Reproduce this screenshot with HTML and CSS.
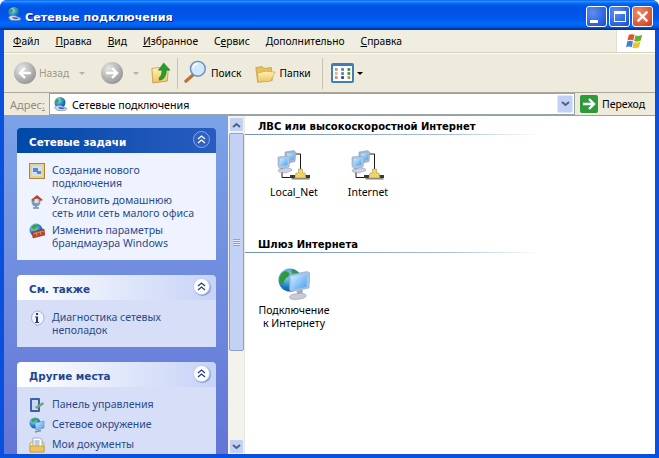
FILE: index.html
```html
<!DOCTYPE html>
<html lang="ru">
<head>
<meta charset="utf-8">
<title>Сетевые подключения</title>
<link rel="stylesheet" href="styles.css">
</head>
<body>
<svg class="defs" width="0" height="0" aria-hidden="true">
  <defs>
    <linearGradient id="gScreen" x1="0" y1="0" x2="1" y2="1"><stop offset="0" stop-color="#d8f0ff"/><stop offset="1" stop-color="#3f9df0"/></linearGradient>
    <radialGradient id="gGlobe" cx=".35" cy=".3" r=".8"><stop offset="0" stop-color="#9fe0ff"/><stop offset=".6" stop-color="#1f7fc8"/><stop offset="1" stop-color="#0d4a90"/></radialGradient>
    <linearGradient id="gFolder" x1="0" y1="0" x2="0" y2="1"><stop offset="0" stop-color="#fff3b8"/><stop offset="1" stop-color="#eec45c"/></linearGradient>
    <radialGradient id="gGray" cx=".35" cy=".3" r=".8"><stop offset="0" stop-color="#e6e6e6"/><stop offset="1" stop-color="#8f8f8f"/></radialGradient>
    <symbol id="globe" viewBox="0 0 16 16">
      <circle cx="7" cy="6.5" r="5.5" fill="url(#gGlobe)"/>
      <path d="M3 3.5c2-1 3 0 3 1.500s-2 1-2.500 2.500-1.500 0-1.500-1.500zM7.500 2c2 0 3.500 1 3.500 2s-2 .5-2.500 0-1.500-1-1-2z" fill="#3da63a"/>
      <path d="M2 10.500c2-1.500 6-1.500 8 0l3.500 1.500c1 1-.5 2.500-3 2.500H6c-2.500 0-5-2-4-4z" fill="#cfd6e8" stroke="#6a7aa8" stroke-width=".6"/>
      <path d="M5 11l5 .5 2 1.500-5 0z" fill="#2f68b8"/>
    </symbol>
    <symbol id="lan" viewBox="0 0 36 30">
      <path d="M18 4h6.500v16" fill="none" stroke="#1a1a1a" stroke-width="1"/>
      <path d="M6 18v9.500h9" fill="none" stroke="#1a1a1a" stroke-width="1"/>
      <path d="M9 2l9-1.500 2 2-1 9-8 2-2-2z" fill="#a4b8d4" stroke="#7f96b8" stroke-width=".5"/>
      <path d="M11 4l6.500-1 .5 6.500-6.500 1.500z" fill="url(#gScreen)"/>
      <path d="M2 7l10-1 2 2-1 9-9 2-2-3z" fill="#b4c6de" stroke="#7f96b8" stroke-width=".5"/>
      <path d="M4 9l7-1 .5 7-7 1.500z" fill="url(#gScreen)"/>
      <path d="M2 20l8-2 5 .5 1 2-7 2.500-6-1z" fill="#cfd2e4" stroke="#8a90b0" stroke-width=".5"/>
      <path d="M14 25h5v3h-5zM29 25h5v3h-5z" fill="#3c3a2c"/>
      <path d="M22.500 19h4v4h2.500l1 5h-11l1-5h2.500z" fill="#f0d468" stroke="#a8882c" stroke-width=".5"/>
      <path d="M15 28h18l1 1.500H16z" fill="#8a8a80"/>
    </symbol>
    <symbol id="gateway" viewBox="0 0 32 32">
      <circle cx="12" cy="12" r="11.500" fill="url(#gGlobe)"/>
      <path d="M4 5c3-3 7-2 7.500 1s-3 3-4.500 5.500-1 6-4 4-1-8 1-10.500zM14 2c3 0 5 1.500 6 3l-4.500.5c-1.500-.5-2-2-1.500-3.500z" fill="#2f9a3a"/>
      <path d="M11 7l18-3.500 3 1.500-1 15-17.500 3.500L11.500 22z" fill="#a8c4e4" stroke="#7a98bc" stroke-width=".5"/>
      <path d="M13 8.500l16-2.500-.5 13-14.500 3z" fill="url(#gScreen)"/>
      <path d="M18.500 23l6-1.500.5 3-5.500 1.500z" fill="#a8a8b4"/>
      <path d="M12 28c2-2 8-3 13-2.500 3.500.5 4 2.500 2 4-3 2-11 2.500-14 1.500-1.500-.5-2-2-1-3z" fill="#c8ccd8" stroke="#8a8ea0" stroke-width=".5"/>
    </symbol>
    <symbol id="folder" viewBox="0 0 24 24">
      <path d="M2 6l7-1 2 2 8-1 1 14-16 2z" fill="#e8bf58" stroke="#b89238" stroke-width=".7"/>
      <path d="M4 12l9-2 10 1-5 10-14 1z" fill="url(#gFolder)" stroke="#c8a040" stroke-width=".7"/>
    </symbol>
    <symbol id="chevUp" viewBox="0 0 9 9">
      <path d="M1 4l3.500-3L8 4M1 8l3.500-3L8 8" fill="none" stroke="currentColor" stroke-width="1.300"/>
    </symbol>
  </defs>
</svg>

<div class="window">
  <header class="titlebar">
    <svg class="title-icon"><use href="#globe"/></svg>
    <span class="title-text">Сетевые подключения</span>
    <div class="caption-btns">
      <button class="cap cap-blue" aria-label="Свернуть"><span class="glyph-min"></span></button>
      <button class="cap cap-blue" aria-label="Развернуть"><span class="glyph-max"></span></button>
      <button class="cap cap-red" aria-label="Закрыть">
        <svg viewBox="0 0 12 12" width="13" height="13"><path d="M1.500 1.500l9 9M10.500 1.500l-9 9" stroke="#fff" stroke-width="2.200"/></svg>
      </button>
    </div>
  </header>

  <div class="inner">
    <nav class="menubar">
      <div class="menus">
        <span class="menu"><u>Ф</u>айл</span>
        <span class="menu"><u>П</u>равка</span>
        <span class="menu"><u>В</u>ид</span>
        <span class="menu"><u>И</u>збранное</span>
        <span class="menu">С<u>е</u>рвис</span>
        <span class="menu"><u>Д</u>ополнительно</span>
        <span class="menu"><u>С</u>правка</span>
      </div>
      <div class="flag-box">
        <svg viewBox="0 0 22 20" width="21" height="19">
          <path d="M3 3c2-1 4-1 6 0l-1.500 6c-2-1-4-1-6 0z" fill="#e8502c"/>
          <path d="M10 3.500c2 1 4 1 7-.500l-1.500 6c-3 1.500-5 1.500-7 .5z" fill="#68b030"/>
          <path d="M1.300 10c2-1 4-1 6 0L6 16c-2-1-4-1-6 0z" fill="#3c80e0"/>
          <path d="M8.200 10.500c2 1 4 1 7-.500L13.700 16c-3 1.500-5 1.500-7 .5z" fill="#f0c030"/>
        </svg>
      </div>
    </nav>

    <div class="toolbar">
      <div class="tb-group tb-nav">
        <span class="round-btn"><svg viewBox="0 0 22 22" width="22" height="22"><circle cx="11" cy="11" r="11" fill="url(#gGray)"/><path d="M17 11H7M11 6l-5 5 5 5" fill="none" stroke="#fff" stroke-width="2.400"/></svg></span>
        <span class="tb-label muted">Назад</span>
        <span class="mini-arrow"></span>
        <span class="round-btn fwd"><svg viewBox="0 0 22 22" width="22" height="22"><circle cx="11" cy="11" r="11" fill="url(#gGray)"/><path d="M5 11h10M11 6l5 5-5 5" fill="none" stroke="#fff" stroke-width="2.400"/></svg></span>
        <span class="mini-arrow"></span>
        <svg class="up-icon" viewBox="0 0 22 26" width="20" height="24">
          <path d="M1 9l8-1 1 2 9-1-1 14-16 2z" fill="url(#gFolder)" stroke="#b89238" stroke-width=".8"/>
          <path d="M9 19c2-1 3-4 3-8H8l6-8 7 8h-4c0 6-3 11-8 11z" fill="#2c9a30" stroke="#12701c" stroke-width=".5"/>
        </svg>
      </div>
      <div class="tb-group tb-tools">
        <svg class="search-icon" viewBox="0 0 26 26" width="24" height="24">
          <path d="M10 16l-8 7" stroke="#c0703a" stroke-width="3.400" stroke-linecap="round"/>
          <circle cx="15" cy="9.500" r="8" fill="#cfe8fa" stroke="#6a90c0" stroke-width="1.600"/>
          <path d="M10 9c0-3 2-5 5-5" fill="none" stroke="#fff" stroke-width="1.500"/>
        </svg>
        <span class="tb-label">Поиск</span>
        <svg class="folders-icon"><use href="#folder"/></svg>
        <span class="tb-label">Папки</span>
      </div>
      <div class="tb-group tb-views">
        <span class="view-btn">
          <svg viewBox="0 0 20 14" width="18" height="13">
            <g fill="#c88a70"><rect x="1" y="1" width="3" height="3"/><rect x="1" y="10" width="3" height="3"/></g>
            <g fill="#5a7ab0"><rect x="1" y="5.500" width="3" height="3" fill="#d8b0a0"/><rect x="8" y="1" width="3" height="3"/><rect x="8" y="5.500" width="3" height="3"/><rect x="8" y="10" width="3" height="3" fill="#1f3f80"/></g>
            <g fill="#3f8a50"><rect x="15" y="1" width="3" height="3"/><rect x="15" y="5.500" width="3" height="3"/><rect x="15" y="10" width="3" height="3" fill="#b09050"/></g>
          </svg>
        </span>
        <span class="black-arrow"></span>
      </div>
    </div>

    <div class="addressbar">
      <span class="addr-label">Адрес<u>:</u></span>
      <div class="addr-field">
        <svg class="addr-icon"><use href="#globe"/></svg>
        <span class="addr-text">Сетевые подключения</span>
        <span class="addr-drop"><svg viewBox="0 0 9 6" width="9" height="6"><path d="M1 1l3.500 3L8 1" fill="none" stroke="#4d6185" stroke-width="2"/></svg></span>
      </div>
      <span class="go-btn"><svg viewBox="0 0 18 18" width="18" height="18"><rect width="18" height="18" rx="2" fill="#2f9a3c"/><path d="M3 9h10M9 4l5 5-5 5" fill="none" stroke="#fff" stroke-width="2.400"/></svg></span>
      <span class="go-label">Переход</span>
    </div>

    <main class="main">
      <aside class="sidebar">
        <section class="card card-primary">
          <div class="card-head">
            <span class="head-text">Сетевые задачи</span>
            <span class="chev"><svg viewBox="0 0 9 9" width="9" height="9"><use href="#chevUp"/></svg></span>
          </div>
          <ul class="card-body">
            <li class="task">
              <svg class="task-icon" viewBox="0 0 16 16"><rect x=".5" y=".5" width="15" height="15" fill="#e8d090" stroke="#a88840"/><rect x="3" y="3" width="10" height="10" fill="#cfe0f4"/><path d="M4 5h5v4H4zM8 8h4v3H8z" fill="#5a88c8"/></svg>
              <span>Создание нового<br>подключения</span>
            </li>
            <li class="task">
              <svg class="task-icon" viewBox="0 0 16 16"><circle cx="7" cy="9" r="4.500" fill="#6aa0d8"/><path d="M2 7l6-5 6 5-2 1-4-3-4 3z" fill="#c84028"/><rect x="5.500" y="6" width="4" height="4" fill="#f0e0c0"/><path d="M7 13v2M4 15h6" stroke="#808898" stroke-width="1.400"/></svg>
              <span>Установить домашнюю<br>сеть или сеть малого офиса</span>
            </li>
            <li class="task">
              <svg class="task-icon" viewBox="0 0 16 16"><circle cx="7" cy="7" r="6.500" fill="url(#gGlobe)"/><path d="M2 4c3-3 7-3 8-1-2 1-4 2-5 4z" fill="#3da63a"/><path d="M3 9l12-3 1 6-12 3z" fill="#b8482c" stroke="#782818" stroke-width=".5"/><path d="M4 11l11-3M7 9l1 4M11 8l1 4" stroke="#e8b090" stroke-width=".6"/></svg>
              <span>Изменить параметры<br>брандмауэра Windows</span>
            </li>
          </ul>
        </section>

        <section class="card card-normal card-also">
          <div class="card-head">
            <span class="head-text">См. также</span>
            <span class="chev"><svg viewBox="0 0 9 9" width="9" height="9"><use href="#chevUp"/></svg></span>
          </div>
          <ul class="card-body">
            <li class="task">
              <svg class="task-icon" viewBox="0 0 16 16"><path d="M8 1a7 7 0 0 1 2 13.700L7.500 16V14.500A7 7 0 0 1 8 1z" fill="#f4f6fc" stroke="#8a9ac0" stroke-width=".7"/><rect x="7" y="3" width="2" height="2" fill="#1c3f94"/><path d="M6 6.500h3V12h1v1H6v-1h1V7.500H6z" fill="#1c3f94"/></svg>
              <span>Диагностика сетевых<br>неполадок</span>
            </li>
          </ul>
        </section>

        <section class="card card-normal card-places">
          <div class="card-head">
            <span class="head-text">Другие места</span>
            <span class="chev"><svg viewBox="0 0 9 9" width="9" height="9"><use href="#chevUp"/></svg></span>
          </div>
          <ul class="card-body card-body-places">
            <li class="task">
              <svg class="task-icon" viewBox="0 0 16 16"><rect x="1" y="1" width="10" height="14" rx="1" fill="#3a62a8"/><rect x="3" y="3" width="6" height="10" fill="#c8d8f0"/><path d="M6 10l8-5 1 2-7 5z" fill="#78a068"/></svg>
              <span>Панель управления</span>
            </li>
            <li class="task">
              <svg class="task-icon" viewBox="0 0 16 16"><circle cx="6" cy="6" r="5.500" fill="url(#gGlobe)"/><path d="M2 3c2-2 5-2 6-1-1 2-3 2-4 4z" fill="#3da63a"/><path d="M6 6l9-2v7l-8 2z" fill="url(#gScreen)" stroke="#6a88b0" stroke-width=".6"/><path d="M6 15l6-1.500" stroke="#8088a8" stroke-width="1.500"/></svg>
              <span>Сетевое окружение</span>
            </li>
            <li class="task">
              <svg class="task-icon" viewBox="0 0 16 16"><path d="M1 6l2-1h10l2 1v9H1z" fill="url(#gFolder)" stroke="#b89238" stroke-width=".7"/><path d="M4 1h7l2 2v8H4z" fill="#fff" stroke="#8090b0" stroke-width=".7"/><path d="M5.500 4h5M5.500 6h5M5.500 8h5" stroke="#5a78b0" stroke-width=".8"/><path d="M1 9h14v6H1z" fill="#eec45c" stroke="#b89238" stroke-width=".6"/></svg>
              <span>Мои документы</span>
            </li>
          </ul>
        </section>
      </aside>

      <div class="scrollbar">
        <span class="sb-btn"><svg viewBox="0 0 9 6" width="9" height="6"><path d="M1 5l3.500-3L8 5" fill="none" stroke="#4d6185" stroke-width="2"/></svg></span>
        <div class="sb-track">
          <div class="sb-thumb"><span class="grip"></span></div>
        </div>
        <span class="sb-btn"><svg viewBox="0 0 9 6" width="9" height="6"><path d="M1 1l3.500 3L8 1" fill="none" stroke="#4d6185" stroke-width="2"/></svg></span>
      </div>

      <div class="content">
        <section class="group group-lan">
          <h2 class="group-title">ЛВС или высокоскоростной Интернет</h2>
          <div class="tiles">
            <div class="tile"><svg class="tile-icon lan-icon"><use href="#lan"/></svg><span>Local_Net</span></div>
            <div class="tile"><svg class="tile-icon lan-icon"><use href="#lan"/></svg><span>Internet</span></div>
          </div>
        </section>
        <section class="group">
          <h2 class="group-title">Шлюз Интернета</h2>
          <div class="tiles">
            <div class="tile"><svg class="tile-icon gw-icon"><use href="#gateway"/></svg><span>Подключение<br>к Интернету</span></div>
          </div>
        </section>
      </div>
    </main>
  </div>
</div>
</body>
</html>
```

FILE: styles.css
```css
* { box-sizing: border-box; }
html, body { margin: 0; padding: 0; }
body {
  width: 659px;
  height: 458px;
  overflow: hidden;
  background: #fff;
  font-family: "Noto Sans", "DejaVu Sans", sans-serif;
  font-size: 10.5px;
  color: #000;
}
.defs { position: absolute; }

.window {
  width: 659px;
  height: 458px;
  display: flex;
  flex-direction: column;
  padding: 0 4px 4px;
  background: #0a50de;
  border-radius: 7px 7px 0 0;
}
.titlebar {
  flex: 0 0 30px;
  margin: 0 -4px;
  padding: 0 6px 0 7px;
  display: flex;
  align-items: center;
  border-radius: 7px 7px 0 0;
  background: linear-gradient(#0058ee 0%, #3593ff 4%, #288eff 6%, #127dff 8%, #036ffc 10%, #0262ee 14%, #0057e5 20%, #0054e3 24%, #0055eb 56%, #005bf5 66%, #026afe 76%, #0062ef 86%, #0052d6 92%, #0040ab 94%, #003092 100%);
}
.title-icon { width: 16px; height: 16px; margin-right: 2px; margin-top: -2px; }
.title-text {
  flex: 1;
  font-family: "DejaVu Sans", sans-serif;
  font-size: 11.2px;
  font-weight: 700;
  color: #fff;
  text-shadow: 1px 1px 0 #0f1089;
  margin-top: 4px;
}
.caption-btns { display: flex; gap: 2px; margin-top: 3px; }
.cap {
  width: 21px;
  height: 21px;
  padding: 0;
  border: 1px solid #fff;
  border-radius: 3px;
  display: flex;
  align-items: center;
  justify-content: center;
}
.cap-blue { background: radial-gradient(circle at 30% 30%, #5d8ff0, #2a5fdc 70%, #1d48c0); }
.cap-red { background: radial-gradient(circle at 30% 30%, #ec8c6c, #d9573a 65%, #bc3a1c); }
.glyph-min { width: 8px; height: 3px; background: #fff; align-self: flex-end; margin: 0 6px 3px 0; }
.glyph-max { width: 12px; height: 11px; border: 1px solid #fff; border-top-width: 3px; }

.inner {
  flex: 1;
  min-height: 0;
  display: flex;
  flex-direction: column;
  background: #ece9d8;
}

.menubar {
  flex: 0 0 23px;
  display: flex;
  justify-content: space-between;
  border-bottom: 1px solid #d8d2bd;
  background: #f0eee0;
}
.menus { display: flex; align-items: center; padding-left: 9px; gap: 16px; padding-bottom: 1px; font-size: 10.25px; }
.menu u, .addr-label u { text-underline-offset: 1px; }
.flag-box {
  width: 39px;
  background: #fff;
  display: flex;
  align-items: center;
  justify-content: center;
  border-left: 1px solid #e4e0d0;
}

.toolbar {
  flex: 0 0 40px;
  display: flex;
  align-items: center;
  border-top: 1px solid #fff;
  border-bottom: 1px solid #aca899;
  background: #eeebdc;
}
.tb-group { display: flex; align-items: center; height: 31px; }
.tb-nav { padding-left: 10px; width: 174px; border-right: 1px solid #c6c2b0; }
.tb-tools { padding-left: 6px; width: 145px; border-right: 1px solid #c6c2b0; }
.tb-views { padding-left: 8px; }
.tb-label { font-size: 10.25px; margin-left: 3px; }
.muted { color: #9a988e; }
.round-btn { display: flex; }
.mini-arrow {
  width: 0; height: 0; margin-left: 10px;
  border: 3px solid transparent; border-top-color: #b4b2a8; border-bottom: 0;
}
.fwd { margin-left: 16px; }
.up-icon { margin-left: 12px; margin-top: -2px; }
.search-icon { flex: none; margin-top: -3px; }
.folders-icon { width: 22px; height: 22px; margin-left: 13px; }
.view-btn {
  width: 23px;
  height: 20px;
  display: flex;
  align-items: center;
  justify-content: center;
  background: #fff;
  border: 2px solid #3f7cb8;
  border-top-width: 3px;
  border-radius: 2px;
}
.black-arrow {
  width: 0; height: 0; margin-left: 3px;
  border: 3px solid transparent; border-top-color: #000; border-bottom: 0;
}

.addressbar {
  flex: 0 0 23px;
  display: flex;
  align-items: center;
  padding-left: 6px;
  border-bottom: 1px solid #9aa0b0;
  background: #eeebdc;
}
.addr-label { color: #8e8c82; width: 39px; flex: none; font-size: 11px; }
.addr-field {
  width: 526px;
  height: 22px;
  display: flex;
  align-items: center;
  background: #fff;
  border: 1px solid #9aa4a6;
  padding-left: 3px;
}
.addr-icon { width: 16px; height: 16px; margin-right: 3px; }
.addr-text { flex: 1; white-space: nowrap; font-size: 10.7px; padding-top: 1px; }
.addr-drop {
  width: 16px;
  height: 18px;
  margin-right: 1px;
  display: flex;
  align-items: center;
  justify-content: center;
  background: #c3d2f4;
  border: 1px solid #dfe7fa;
  border-radius: 2px;
}
.go-btn { display: flex; margin-left: 5px; }
.go-label { margin-left: 4px; }

.main { flex: 1; min-height: 0; display: flex; background: #fff; }

.sidebar {
  width: 224px;
  flex: none;
  padding: 12px 12px 0 13px;
  overflow: hidden;
  background: linear-gradient(#7ba2e7, #6375d6);
  display: flex;
  flex-direction: column;
}
.card { flex: none; width: 199px; margin-bottom: 15px; }
.card-head {
  height: 25px;
  padding: 0 6px 0 12px;
  border-radius: 4px 4px 0 0;
  display: flex;
  align-items: center;
  justify-content: space-between;
  font-family: "DejaVu Sans", sans-serif;
  font-weight: 700;
  font-size: 10.4px;
}
.head-text { margin-top: 3px; }
.card-primary .card-head {
  color: #fff;
  background: linear-gradient(90deg, #0049a8, #2a5cc0);
}
.card-normal .card-head {
  color: #1f4690;
  background: linear-gradient(90deg, #fff, #c6d3f7);
}
.chev {
  width: 17px;
  height: 17px;
  margin-top: -2px;
  border-radius: 50%;
  display: flex;
  align-items: center;
  justify-content: center;
}
.card-primary .chev { color: #fff; background: #2f62c4; border: 1px solid #8aa8e4; }
.card-normal .chev { color: #1f3f90; background: #fff; border: 1px solid #c4cde8; box-shadow: 1px 1px 1px #8a9ad0; }
.card-body {
  margin: 0;
  padding: 11px 8px 8px 12px;
  list-style: none;
  display: flex;
  flex-direction: column;
  gap: 4px;
}
.card-body-places { gap: 5px; }
.card-primary .card-body { background: #eff3ff; height: 107px; }
.card-normal .card-body { background: #d6dff7; }
.card-also .card-body { height: 47px; }
.task {
  display: flex;
  align-items: flex-start;
  gap: 7px;
  color: #2a4a8c;
  line-height: 13px;
  font-size: 10.55px;
  white-space: nowrap;
}
.task-icon { width: 16px; height: 16px; flex: none; margin-top: -1px; }

.scrollbar {
  width: 17px;
  flex: none;
  display: flex;
  flex-direction: column;
  padding-left: 1px;
  background: #f4f2ec;
  border-right: 1px solid #e8e6de;
}
.sb-btn {
  flex: 0 0 15px;
  margin: 1px 0 0 0;
  display: flex;
  align-items: center;
  justify-content: center;
  background: #c3d2f4;
  border: 1px solid #eef2fc;
  border-radius: 2px;
}
.sb-track { flex: 1; min-height: 0; padding: 1px 0; }
.sb-thumb {
  height: 218px;
  display: flex;
  align-items: center;
  justify-content: center;
  background: #c3d2f4;
  border: 1px solid #8ea2cc;
  border-radius: 2px;
}
.grip {
  width: 7px;
  height: 7px;
  background: repeating-linear-gradient(#8ea2cc 0 1px, #e0e8fa 1px 2px);
}

.content { flex: 1; min-width: 0; background: #fff; padding-top: 3px; }
.group-lan { height: 118px; }
.group-title {
  margin: 0;
  height: 16px;
  padding-left: 13px;
  font-family: "DejaVu Sans", sans-serif;
  font-size: 10px;
  font-weight: 700;
  line-height: 15px;
  white-space: nowrap;
  border-bottom: 1px solid transparent;
  border-image: linear-gradient(90deg, #7090b8, #a8c0d8 50%, #fff 72%) 1;
}
.tiles { display: flex; padding-left: 12px; padding-top: 15px; }
.tile {
  width: 74px;
  display: flex;
  flex-direction: column;
  align-items: center;
  text-align: center;
  line-height: 13px;
  white-space: nowrap;
}
.tile-icon { display: block; }
.lan-icon { width: 36px; height: 30px; margin-bottom: 6px; }
.gw-icon { width: 32px; height: 32px; margin-bottom: 4px; }
```
